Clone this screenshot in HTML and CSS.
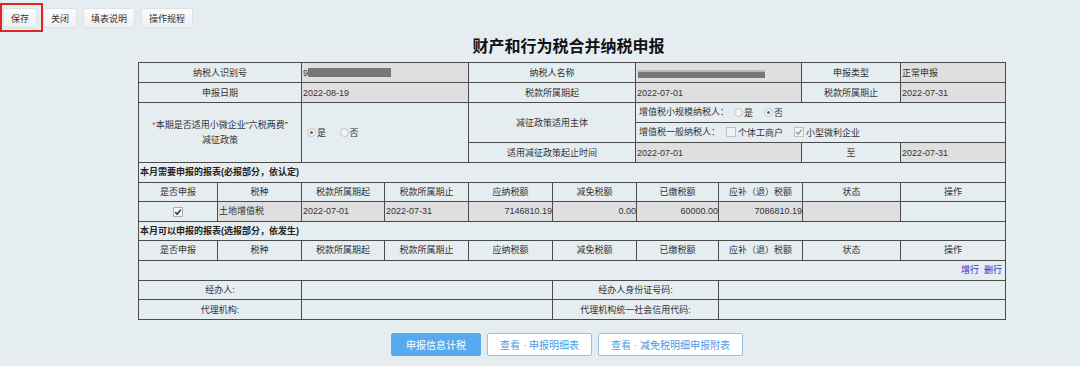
FILE: index.html
```html
<!DOCTYPE html>
<html lang="zh-CN">
<head>
<meta charset="utf-8">
<title>财产和行为税合并纳税申报</title>
<link rel="stylesheet" href="styles.css">
</head>
<body>
<div class="toolbar">
  <button class="tb-btn">保存</button>
  <button class="tb-btn">关闭</button>
  <button class="tb-btn">填表说明</button>
  <button class="tb-btn">操作规程</button>
  <span class="highlight"></span>
</div>
<div class="page">
  <h1 class="title">财产和行为税合并纳税申报</h1>

  <table class="grid info">
    <colgroup>
      <col class="w163"><col class="w167"><col class="w167"><col class="w166"><col class="w99"><col class="w105">
    </colgroup>
    <tr>
      <td class="lbl">纳税人识别号</td>
      <td class="ro">9<span class="mask mask-id"></span></td>
      <td class="lbl">纳税人名称</td>
      <td class="ro"><span class="mask mask-name"></span></td>
      <td class="lbl">申报类型</td>
      <td class="ro">正常申报</td>
    </tr>
    <tr>
      <td class="lbl">申报日期</td>
      <td class="ro">2022-08-19</td>
      <td class="lbl">税款所属期起</td>
      <td class="ro">2022-07-01</td>
      <td class="lbl">税款所属期止</td>
      <td class="ro">2022-07-31</td>
    </tr>
    <tr>
      <td class="lbl policy" rowspan="3"><span class="req">*</span>本期是否适用小微企业“六税两费”<br>减征政策</td>
      <td class="opts" rowspan="3">
        <span class="radio on"></span><span class="opt">是</span>
        <span class="radio"></span><span class="opt">否</span>
      </td>
      <td class="lbl" rowspan="2">减征政策适用主体</td>
      <td class="sub" colspan="3">增值税小规模纳税人：<span class="radio r1"></span><span class="opt">是</span><span class="radio on"></span><span class="opt">否</span></td>
    </tr>
    <tr>
      <td class="sub" colspan="3">增值税一般纳税人：<span class="chk c1"></span><span class="opt">个体工商户</span><span class="chk on c2"><svg viewBox="0 0 10 10" width="8" height="8"><path d="M1.5 5.2 L4 7.6 L8.6 2" fill="none" stroke="#9a9a9a" stroke-width="1.8"/></svg></span><span class="opt">小型微利企业</span></td>
    </tr>
    <tr>
      <td class="lbl">适用减征政策起止时间</td>
      <td class="ro">2022-07-01</td>
      <td class="lbl">至</td>
      <td class="ro">2022-07-31</td>
    </tr>
  </table>

  <table class="grid list">
    <colgroup>
      <col class="w79"><col class="w84"><col class="w83"><col class="w84"><col class="w84"><col class="w84"><col class="w82"><col class="w84"><col class="w98"><col class="w105">
    </colgroup>
    <tr class="r19"><td class="sec" colspan="10">本月需要申报的报表(必报部分，依认定)</td></tr>
    <tr class="r19">
      <td class="lbl">是否申报</td><td class="lbl">税种</td><td class="lbl">税款所属期起</td><td class="lbl">税款所属期止</td><td class="lbl">应纳税额</td><td class="lbl">减免税额</td><td class="lbl">已缴税额</td><td class="lbl">应补（退）税额</td><td class="lbl">状态</td><td class="lbl">操作</td>
    </tr>
    <tr>
      <td class="lbl"><span class="chk on big"><svg viewBox="0 0 10 10" width="8" height="8"><path d="M1.5 5.2 L4 7.6 L8.6 2" fill="none" stroke="#2b2b2b" stroke-width="1.8"/></svg></span></td>
      <td class="ro">土地增值税</td>
      <td class="ro">2022-07-01</td>
      <td class="ro">2022-07-31</td>
      <td class="ro num">7146810.19</td>
      <td class="ro num">0.00</td>
      <td class="ro num">60000.00</td>
      <td class="ro num">7086810.19</td>
      <td class="ro"></td>
      <td></td>
    </tr>
    <tr class="r19"><td class="sec" colspan="10">本月可以申报的报表(选报部分，依发生)</td></tr>
    <tr>
      <td class="lbl">是否申报</td><td class="lbl">税种</td><td class="lbl">税款所属期起</td><td class="lbl">税款所属期止</td><td class="lbl">应纳税额</td><td class="lbl">减免税额</td><td class="lbl">已缴税额</td><td class="lbl">应补（退）税额</td><td class="lbl">状态</td><td class="lbl">操作</td>
    </tr>
    <tr>
      <td class="links" colspan="10"><a href="#">增行</a><a href="#">删行</a></td>
    </tr>
  </table>

  <table class="grid sign">
    <colgroup>
      <col class="w163"><col class="w251"><col class="w166"><col class="w287">
    </colgroup>
    <tr class="r19">
      <td class="lbl">经办人:</td><td></td><td class="lbl">经办人身份证号码:</td><td></td>
    </tr>
    <tr>
      <td class="lbl">代理机构:</td><td></td><td class="lbl">代理机构统一社会信用代码:</td><td></td>
    </tr>
  </table>

  <div class="actions">
    <button class="btn primary">申报信息计税</button>
    <button class="btn">查看 · 申报明细表</button>
    <button class="btn">查看 · 减免税明细申报附表</button>
  </div>
</div>
</body>
</html>
```

FILE: styles.css
```css
* { box-sizing: border-box; }
html, body { margin: 0; }
body {
  width: 1080px;
  height: 366px;
  overflow: hidden;
  position: relative;
  background: #e6edf1;
  font-family: "Liberation Sans", "Noto Sans CJK SC", sans-serif;
  font-size: 9px;
  color: #333;
}

.toolbar {
  position: relative;
  display: flex;
  gap: 6px;
  height: 28px;
  padding: 8px 0 0 3px;
}
.tb-btn {
  height: 20px;
  padding: 0 7px;
  font-family: "Noto Sans CJK SC", sans-serif;
  font-size: 9px;
  color: #333;
  background: linear-gradient(#fbfcfc, #eef1f2);
  border: 1px solid #dde2e5;
  border-radius: 2px;
}
.highlight {
  position: absolute;
  left: 0;
  top: 3px;
  width: 43px;
  height: 29px;
  border: 2px solid #e0242a;
}

.page {
  margin-left: 138px;
  width: 867px;
}
.title {
  margin: 0;
  height: 34px;
  line-height: 34px;
  padding-right: 6px;
  font-family: "Noto Sans CJK SC", sans-serif;
  font-size: 16px;
  font-weight: bold;
  text-align: center;
  color: #111;
}

.grid {
  width: 867px;
  border-collapse: collapse;
  table-layout: fixed;
}
.grid td {
  border: 1px solid #4b4b4b;
  height: 20px;
  padding: 0 1px;
  white-space: nowrap;
  overflow: hidden;
  vertical-align: middle;
  line-height: 12px;
}
.grid tr.r19 td { height: 19px; }
.list tr:first-child td,
.sign tr:first-child td { border-top: none; }

.w79 { width: 79px; }
.w82 { width: 82px; }
.w83 { width: 83px; }
.w84 { width: 84px; }
.w98 { width: 98px; }
.w99 { width: 99px; }
.w105 { width: 105px; }
.w163 { width: 163px; }
.w166 { width: 166px; }
.w167 { width: 167px; }
.w251 { width: 251px; }
.w287 { width: 287px; }

.lbl { text-align: center; }
.ro { background: #e0dfdf; }
.num { text-align: right; padding-right: 0 !important; }
.sec { font-weight: bold; color: #222; }

.policy { line-height: 15px !important; }
.req { color: #e8453c; }

.mask {
  display: inline-block;
  vertical-align: middle;
  background: #777;
}
.mask-id { width: 83px; height: 9px; margin-top: -1px; }
.mask-name {
  width: 127px;
  height: 8px;
  margin-left: 1px;
  margin-top: 1px;
  background: linear-gradient(#b9b9b9 0, #b9b9b9 2px, #777 2px);
}

.opts { padding-left: 5px !important; }
.sub { padding-left: 3px !important; }

.radio {
  display: inline-block;
  position: relative;
  width: 9px;
  height: 9px;
  border: 1px solid #c2c2c2;
  border-radius: 50%;
  background: #f2f3f3;
  vertical-align: middle;
  margin: -1px 1px 0 0;
}
.radio.on::after {
  content: "";
  position: absolute;
  left: 2px;
  top: 2px;
  width: 3px;
  height: 3px;
  border-radius: 50%;
  background: #6a6a6a;
}
.opt { vertical-align: middle; margin-right: 11px; }
.r1 { margin-left: 5px; }

.chk {
  display: inline-flex;
  align-items: center;
  justify-content: center;
  width: 10px;
  height: 10px;
  border: 1px solid #c0c0c0;
  background: #f3f3f3;
  vertical-align: middle;
  margin: -1px 2px 0 0;
}
.c1 { margin-left: 6px; }
.chk.big { border-color: #b0b0b0; margin: 0; }

.links { text-align: right; padding-right: 3px !important; }
.links a {
  color: #2b2bd6;
  text-decoration: none;
  margin-left: 5px;
}

.actions {
  display: flex;
  justify-content: center;
  gap: 6px;
  margin-top: 13px;
  padding-right: 9px;
}
.btn {
  height: 23px;
  padding: 0 12px;
  font-family: "Liberation Sans", "Noto Sans CJK SC", sans-serif;
  font-size: 10px;
  color: #4b9be6;
  background: #fff;
  border: 1px solid #8cc4f2;
  border-radius: 2px;
}
.btn.primary {
  padding: 0 14px;
  background: #58aaef;
  border-color: #58aaef;
  color: #fff;
}
```
